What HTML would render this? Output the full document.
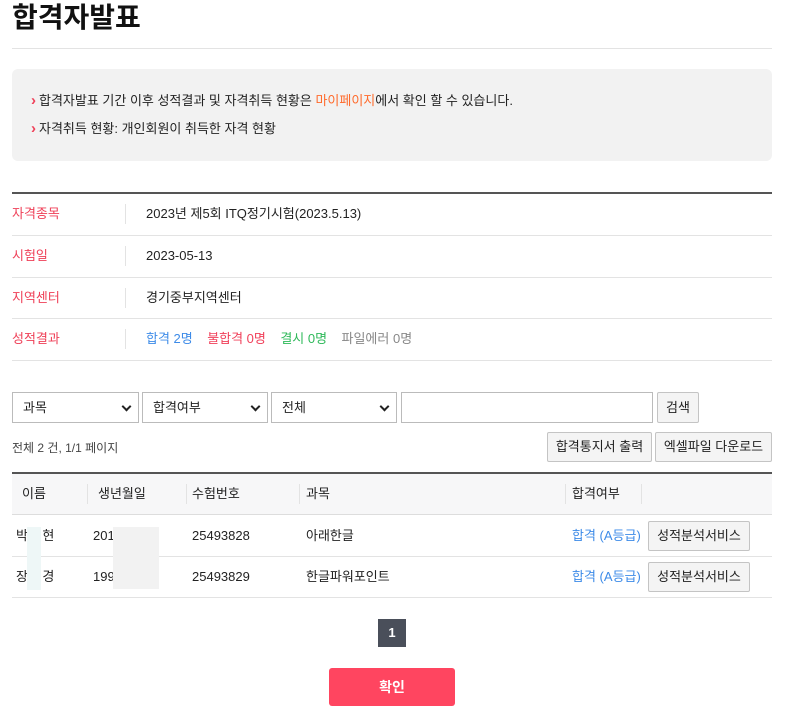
<!DOCTYPE html>
<html><head><meta charset="utf-8"><style>
*{margin:0;padding:0;box-sizing:border-box}
body{width:786px;height:716px;background:#fff;font-family:"Liberation Sans","Noto Sans CJK KR",sans-serif;color:#222;position:relative;overflow:hidden}
.a{position:absolute;white-space:nowrap}
.t{font-size:13px;line-height:18px}
.red{color:#ef4058}
.ar{color:#ef4058;font-weight:bold;font-size:15px;margin-right:3px}
.sel{position:absolute;top:392px;height:31px;border:1px solid #bbb;background:#fff;font-size:13px;line-height:18px;padding:6px 0 0 10px}
.sel:after{content:"";position:absolute;right:8px;top:10px;width:5px;height:5px;border-right:2px solid #222;border-bottom:2px solid #222;transform:rotate(45deg)}
.btn{position:absolute;border:1px solid #c4c4c4;border-radius:2px;background:#f4f4f4;font-size:13px;text-align:center}
.hl{position:absolute;left:12px;width:760px;height:1px;background:#e3e3e3}
.vs{position:absolute;width:1px;background:#e3e3e3}
</style></head><body>
<div class="a" style="left:12px;top:1px;font-size:28px;font-weight:bold;color:#111;line-height:34px">합격자발표</div>
<div class="hl" style="top:48px"></div>
<div class="a" style="left:12px;top:69px;width:760px;height:92px;background:#f2f2f2;border-radius:6px"></div>
<div class="a t" style="left:31px;top:92px"><span class="ar">›</span>합격자발표 기간 이후 성적결과 및 자격취득 현황은 <span style="color:#ff6a2b">마이페이지</span>에서 확인 할 수 있습니다.</div>
<div class="a t" style="left:31px;top:120px"><span class="ar">›</span>자격취득 현황: 개인회원이 취득한 자격 현황</div>
<div class="a" style="left:12px;top:192px;width:760px;height:2px;background:#555"></div>
<div class="hl" style="top:235px"></div><div class="hl" style="top:277px"></div><div class="hl" style="top:318px"></div><div class="hl" style="top:360px"></div>
<div class="vs" style="left:125px;top:204px;height:20px"></div>
<div class="vs" style="left:125px;top:246px;height:20px"></div>
<div class="vs" style="left:125px;top:288px;height:20px"></div>
<div class="vs" style="left:125px;top:329px;height:20px"></div>
<div class="a t red" style="left:12px;top:205px">자격종목</div><div class="a t" style="left:146px;top:205px">2023년 제5회 ITQ정기시험(2023.5.13)</div>
<div class="a t red" style="left:12px;top:247px">시험일</div><div class="a t" style="left:146px;top:247px">2023-05-13</div>
<div class="a t red" style="left:12px;top:289px">지역센터</div><div class="a t" style="left:146px;top:289px">경기중부지역센터</div>
<div class="a t red" style="left:12px;top:330px">성적결과</div>
<div class="a t" style="left:146px;top:330px"><span style="color:#3d8be8">합격 2명</span>&nbsp;&nbsp;&nbsp;&nbsp;<span style="color:#f0405a">불합격 0명</span>&nbsp;&nbsp;&nbsp;&nbsp;<span style="color:#2fb95a">결시 0명</span>&nbsp;&nbsp;&nbsp;&nbsp;<span style="color:#888">파일에러 0명</span></div>
<div class="sel" style="left:12px;width:127px">과목</div>
<div class="sel" style="left:142px;width:126px">합격여부</div>
<div class="sel" style="left:271px;width:126px">전체</div>
<div class="a" style="left:401px;top:392px;width:252px;height:31px;border:1px solid #bbb"></div>
<div class="btn" style="left:657px;top:392px;width:42px;height:31px;line-height:29px">검색</div>
<div class="a" style="left:12px;top:440px;font-size:12px;line-height:16px;color:#444">전체 2 건, 1/1 페이지</div>
<div class="btn" style="left:547px;top:432px;width:105px;height:30px;line-height:28px">합격통지서 출력</div>
<div class="btn" style="left:655px;top:432px;width:117px;height:30px;line-height:28px">엑셀파일 다운로드</div>
<div class="a" style="left:12px;top:472px;width:760px;height:43px;background:#f7f7f8;border-top:2px solid #555;border-bottom:1px solid #ddd"></div>
<div class="vs" style="left:87px;top:484px;height:20px"></div><div class="vs" style="left:186px;top:484px;height:20px"></div><div class="vs" style="left:299px;top:484px;height:20px"></div><div class="vs" style="left:565px;top:484px;height:20px"></div><div class="vs" style="left:641px;top:484px;height:20px"></div>
<div class="a t" style="left:22px;top:485px">이름</div><div class="a t" style="left:98px;top:485px">생년월일</div><div class="a t" style="left:192px;top:485px">수험번호</div><div class="a t" style="left:306px;top:485px">과목</div><div class="a t" style="left:572px;top:485px">합격여부</div>
<div class="hl" style="top:556px"></div><div class="hl" style="top:597px"></div>
<div class="a t" style="left:16px;top:527px">박&nbsp;&nbsp;&nbsp;&nbsp;현</div><div class="a t" style="left:93px;top:527px">201</div><div class="a t" style="left:192px;top:527px">25493828</div><div class="a t" style="left:306px;top:527px">아래한글</div><div class="a t" style="left:572px;top:527px;color:#3d8be8">합격 (A등급)</div>
<div class="a t" style="left:16px;top:568px">장&nbsp;&nbsp;&nbsp;&nbsp;경</div><div class="a t" style="left:93px;top:568px">199</div><div class="a t" style="left:192px;top:568px">25493829</div><div class="a t" style="left:306px;top:568px">한글파워포인트</div><div class="a t" style="left:572px;top:568px;color:#3d8be8">합격 (A등급)</div>
<div class="a" style="left:27px;top:527px;width:14px;height:63px;background:#eef7f7"></div>
<div class="a" style="left:113px;top:527px;width:46px;height:62px;background:#f2f2f2"></div>
<div class="btn" style="left:648px;top:521px;width:102px;height:30px;line-height:28px">성적분석서비스</div>
<div class="btn" style="left:648px;top:562px;width:102px;height:30px;line-height:28px">성적분석서비스</div>
<div class="a" style="left:378px;top:619px;width:28px;height:28px;background:#4a4f5a;color:#fff;font-size:13px;text-align:center;line-height:28px;font-weight:bold">1</div>
<div class="a" style="left:329px;top:668px;width:126px;height:38px;background:#ff4560;border-radius:3px;color:#fff;font-size:14px;font-weight:bold;text-align:center;line-height:38px">확인</div>
</body></html>
